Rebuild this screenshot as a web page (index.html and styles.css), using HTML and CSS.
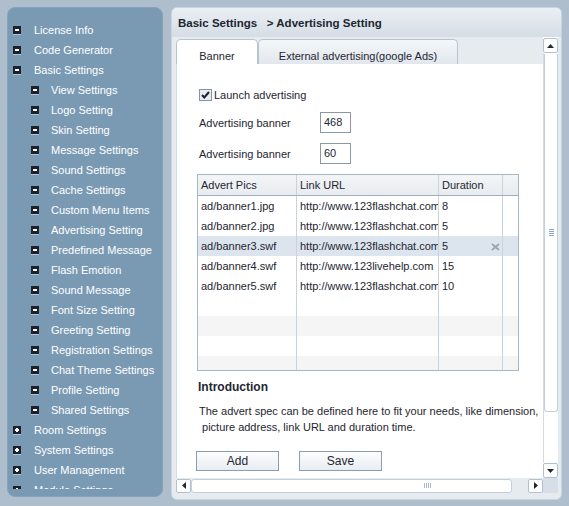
FILE: index.html
```html
<!DOCTYPE html>
<html lang="en">
<head>
    <meta charset="UTF-8">
    <title>Advertising Setting</title>
    <link rel="stylesheet" href="styles.css">
</head>
<body>
<div class="layout">

    <!-- Left navigation tree -->
    <div class="sidebar">
        <ul class="menu">
            <li class="top"><span class="ico"></span>License Info</li>
            <li class="top"><span class="ico"></span>Code Generator</li>
            <li class="top"><span class="ico"></span>Basic Settings</li>
            <li class="sub"><span class="ico"></span>View Settings</li>
            <li class="sub"><span class="ico"></span>Logo Setting</li>
            <li class="sub"><span class="ico"></span>Skin Setting</li>
            <li class="sub"><span class="ico"></span>Message Settings</li>
            <li class="sub"><span class="ico"></span>Sound Settings</li>
            <li class="sub"><span class="ico"></span>Cache Settings</li>
            <li class="sub"><span class="ico"></span>Custom Menu Items</li>
            <li class="sub"><span class="ico"></span>Advertising Setting</li>
            <li class="sub"><span class="ico"></span>Predefined Message</li>
            <li class="sub"><span class="ico"></span>Flash Emotion</li>
            <li class="sub"><span class="ico"></span>Sound Message</li>
            <li class="sub"><span class="ico"></span>Font Size Setting</li>
            <li class="sub"><span class="ico"></span>Greeting Setting</li>
            <li class="sub"><span class="ico"></span>Registration Settings</li>
            <li class="sub"><span class="ico"></span>Chat Theme Settings</li>
            <li class="sub"><span class="ico"></span>Profile Setting</li>
            <li class="sub"><span class="ico"></span>Shared Settings</li>
            <li class="top"><span class="ico plus"></span>Room Settings</li>
            <li class="top"><span class="ico plus"></span>System Settings</li>
            <li class="top"><span class="ico plus"></span>User Management</li>
            <li class="top"><span class="ico plus"></span>Module Settings</li>
        </ul>
    </div>

    <!-- Main panel -->
    <div class="panel">
        <div class="panel-head">Basic Settings&nbsp;&nbsp; &gt; Advertising Setting</div>

        <div class="panel-body">
            <div class="view">
                <div class="tabs">
                    <div class="tab active">Banner</div>
                    <div class="tab">External advertising(google Ads)</div>
                </div>

                <div class="content">
                    <div class="check-row">
                        <svg class="checkbox" width="13" height="12" viewBox="0 0 13 12">
                            <rect x="0.5" y="0.5" width="12" height="11" fill="#e9edf1" stroke="#8195a9"/>
                            <path d="M3 6 L5.3 8.5 L10 3" fill="none" stroke="#1a222c" stroke-width="2"/>
                        </svg>
                        <span>Launch advertising</span>
                    </div>

                    <div class="field-row">
                        <label>Advertising banner</label>
                        <div class="input">468</div>
                    </div>
                    <div class="field-row second">
                        <label>Advertising banner</label>
                        <div class="input">60</div>
                    </div>

                    <div class="grid-table">
                        <div class="row head">
                            <span>Advert Pics</span><span>Link URL</span><span>Duration</span><span></span>
                        </div>
                        <div class="row">
                            <span>ad/banner1.jpg</span><span>http://www.123flashchat.com</span><span>8</span><span></span>
                        </div>
                        <div class="row">
                            <span>ad/banner2.jpg</span><span>http://www.123flashchat.com</span><span>5</span><span></span>
                        </div>
                        <div class="row sel">
                            <span>ad/banner3.swf</span><span>http://www.123flashchat.com</span>
                            <span class="dur">5
                                <svg class="del" width="9" height="8" viewBox="0 0 9 8">
                                    <path d="M1 1 L8 7 M8 1 L1 7" stroke="#98a4b0" stroke-width="1.7"/>
                                </svg>
                            </span><span></span>
                        </div>
                        <div class="row">
                            <span>ad/banner4.swf</span><span>http://www.123livehelp.com</span><span>15</span><span></span>
                        </div>
                        <div class="row">
                            <span>ad/banner5.swf</span><span>http://www.123flashchat.com</span><span>10</span><span></span>
                        </div>
                        <div class="row"><span></span><span></span><span></span><span></span></div>
                        <div class="row alt"><span></span><span></span><span></span><span></span></div>
                        <div class="row"><span></span><span></span><span></span><span></span></div>
                        <div class="row alt"><span></span><span></span><span></span><span></span></div>
                    </div>

                    <h3 class="intro-title">Introduction</h3>
                    <p class="intro">The advert spec can be defined here to fit your needs, like dimension,<br>&nbsp;picture address, link URL and duration time.</p>

                    <div class="actions">
                        <div class="btn">Add</div>
                        <div class="btn">Save</div>
                    </div>
                </div>
            </div>

            <!-- vertical scrollbar -->
            <div class="vscroll">
                <div class="sb-btn">
                    <svg width="7" height="4" viewBox="0 0 7 4"><path d="M0 4 L3.5 0 L7 4 Z" fill="#1e2833"/></svg>
                </div>
                <div class="vtrack">
                    <div class="vthumb"><span class="grip-h"></span></div>
                </div>
                <div class="sb-btn">
                    <svg width="7" height="4" viewBox="0 0 7 4"><path d="M0 0 L7 0 L3.5 4 Z" fill="#1e2833"/></svg>
                </div>
            </div>

            <!-- horizontal scrollbar -->
            <div class="hscroll">
                <div class="sb-btn">
                    <svg width="4" height="7" viewBox="0 0 4 7"><path d="M4 0 L4 7 L0 3.5 Z" fill="#1e2833"/></svg>
                </div>
                <div class="htrack">
                    <div class="hthumb"><span class="grip-v"></span></div>
                </div>
                <div class="sb-btn">
                    <svg width="4" height="7" viewBox="0 0 4 7"><path d="M0 0 L4 3.5 L0 7 Z" fill="#1e2833"/></svg>
                </div>
            </div>

            <div class="corner"></div>
        </div>
    </div>
</div>
</body>
</html>
```

FILE: styles.css
```css
body {
    margin: 0;
    background-color: #aebecd;
    font-family: "Liberation Sans", Arial, sans-serif;
    font-size: 11px;
    color: #1e2631;
}

.layout {
    display: flex;
    gap: 8px;
    padding: 7px;
}

/* Sidebar tree */
.sidebar {
    width: 156px;
    height: 490px;
    box-sizing: border-box;
    background-color: #7a9ab4;
    border: 1px solid #86a3bb;
    border-radius: 8px;
    padding-top: 12px;
}

.menu {
    list-style: none;
    margin: 0;
    padding: 0;
    height: 469px;
    overflow: hidden;
}

.menu li {
    height: 20px;
    display: flex;
    align-items: center;
    color: #fff;
    white-space: nowrap;
}

.menu li.top {
    padding-left: 5px;
}

.menu li.sub {
    padding-left: 23px;
}

.ico {
    position: relative;
    width: 8px;
    height: 8px;
    background-color: #1b222b;
    box-shadow: 0 1px 0 #b4c5d5;
    margin-right: 13px;
    flex-shrink: 0;
}

.sub .ico {
    margin-right: 12px;
}

.ico::before {
    content: "";
    position: absolute;
    left: 2px;
    top: 3px;
    width: 4px;
    height: 2px;
    background-color: #fff;
}

.ico.plus::after {
    content: "";
    position: absolute;
    left: 3px;
    top: 2px;
    width: 2px;
    height: 4px;
    background-color: #fff;
}

/* Main panel */
.panel {
    width: 391px;
    height: 493px;
    box-sizing: border-box;
    border: 1px solid #c9d4de;
    border-radius: 6px;
    background-color: #e6ebf0;
    display: flex;
    flex-direction: column;
    overflow: hidden;
}

.panel-head {
    height: 29px;
    flex-shrink: 0;
    display: flex;
    align-items: center;
    padding-left: 6px;
    font-size: 11.5px;
    font-weight: bold;
    color: #1c2530;
    background: linear-gradient(#eaeff3, #d5dde5);
}

.panel-body {
    display: grid;
    grid-template-columns: 367px 15px;
    grid-template-rows: 441px 15px;
    padding: 0 3px 6px 4px;
}

.view {
    display: flex;
    flex-direction: column;
    min-height: 0;
}

.tabs {
    height: 27px;
    flex-shrink: 0;
    display: flex;
    align-items: flex-end;
}

.tab {
    height: 25px;
    box-sizing: border-box;
    border: 1px solid #b6c4d2;
    border-bottom: none;
    border-radius: 5px 5px 0 0;
    padding-top: 9px;
    line-height: 14px;
    text-align: center;
    width: 200px;
    background: linear-gradient(#f4f7f9, #e1e7ed);
}

.tab.active {
    width: 82px;
    background: #fff;
}

.content {
    flex: 1;
    min-height: 0;
    background-color: #fff;
    border-left: 1px solid #d3dce6;
    padding: 25px 0 0 20px;
    overflow: hidden;
}

.check-row {
    display: flex;
    align-items: center;
    gap: 2px;
    height: 12px;
    margin-left: 2px;
}

.field-row {
    display: flex;
    align-items: center;
    height: 21px;
    margin-top: 11px;
    padding-left: 2px;
}

.field-row.second {
    margin-top: 10px;
}

.field-row label {
    width: 121px;
}

.input {
    width: 31px;
    height: 21px;
    box-sizing: border-box;
    border: 1px solid #8a98a7;
    padding-left: 3px;
    line-height: 19px;
}

/* Advert table */
.grid-table {
    width: 322px;
    height: 197px;
    box-sizing: border-box;
    margin-top: 10px;
    border: 1px solid #a8b7c6;
    overflow: hidden;
}

.row {
    display: grid;
    grid-template-columns: 99px 142px 64px 15px;
    height: 20px;
}

.row span {
    position: relative;
    box-sizing: border-box;
    border-right: 1px solid #c8d3de;
    padding-left: 3px;
    line-height: 20px;
    white-space: nowrap;
    overflow: hidden;
}

.row span:last-child {
    border-right: none;
}

.row.head {
    height: 21px;
    box-sizing: border-box;
    background: linear-gradient(#f3f5f7, #e8ecf0);
    border-bottom: 1px solid #9fafbf;
}

.row.sel {
    background-color: #dce4ed;
}

.row.alt {
    background-color: #f5f5f5;
}

.del {
    position: absolute;
    right: 2px;
    top: 7px;
}

.intro-title {
    margin: 9px 0 0 1px;
    font-size: 12px;
    line-height: 14px;
    color: #1e2733;
}

.intro {
    margin: 9px 0 0 2px;
    line-height: 16px;
    white-space: nowrap;
}

.actions {
    display: flex;
    gap: 20px;
    margin: 16px 0 0 -1px;
}

.btn {
    width: 83px;
    height: 20px;
    box-sizing: border-box;
    border: 1px solid #8c9dae;
    background: linear-gradient(#fdfdfe, #e8edf2);
    font-size: 12px;
    line-height: 18px;
    text-align: center;
}

/* Scrollbars */
.sb-btn {
    width: 15px;
    height: 15px;
    box-sizing: border-box;
    border: 1px solid #b3c1cf;
    border-radius: 2px;
    background-color: #fff;
    display: flex;
    align-items: center;
    justify-content: center;
    flex-shrink: 0;
}

.vscroll {
    display: flex;
    flex-direction: column;
    padding-top: 1px;
    background-color: #fff;
}

.vtrack {
    flex: 1;
    border-left: 1px solid #d3dce6;
    padding-top: 1px;
}

.vthumb {
    height: 358px;
    box-sizing: border-box;
    border: 1px solid #c3cfdb;
    border-top: none;
    border-radius: 0 0 3px 3px;
    display: flex;
    align-items: center;
    justify-content: center;
}

.grip-h {
    width: 5px;
    height: 7px;
    background: repeating-linear-gradient(#8ea5bc 0 1px, transparent 1px 2px);
}

.hscroll {
    display: flex;
    align-items: center;
    background-color: #e6ebf0;
}

.hscroll .sb-btn {
    height: 14px;
}

.htrack {
    flex: 1;
    height: 14px;
    box-sizing: border-box;
    display: flex;
    justify-content: flex-end;
    padding-right: 16px;
}

.hthumb {
    width: 321px;
    height: 14px;
    box-sizing: border-box;
    border: 1px solid #c3cfdb;
    border-radius: 3px;
    background-color: #fff;
    display: flex;
    align-items: center;
    justify-content: flex-end;
    padding-right: 80px;
}

.grip-v {
    width: 7px;
    height: 5px;
    background: repeating-linear-gradient(90deg, #a8b9ca 0 1px, transparent 1px 2px);
}

.corner {
    background-color: #d6dee7;
}
```
